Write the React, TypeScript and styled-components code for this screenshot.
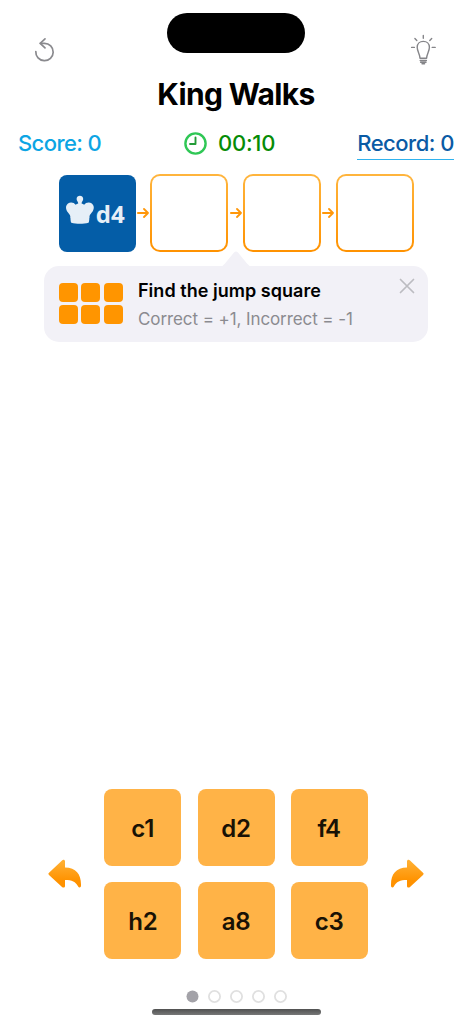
import React from "react";
import styled, { createGlobalStyle } from "styled-components";

const GlobalStyle = createGlobalStyle`
  * { box-sizing: border-box; }
  body { margin: 0; background: #fff; font-family: Inter, "Liberation Sans", sans-serif; }
  button { border: 0; padding: 0; background: none; font: inherit; color: inherit; }
  svg { display: block; flex: none; }
`;

const Screen = styled.main`
  width: 472px;
  height: 1024px;
  background: #fff;
  display: flex;
  flex-direction: column;
  overflow: hidden;
`;

const TopBar = styled.header`
  height: 74px;
  padding: 12.5px 36px 0 34px;
  display: flex;
  justify-content: space-between;
`;

const IconButton = styled.button<{ $top: number }>`
  height: 32px;
  width: 26px;
  margin-top: ${(p) => p.$top}px;
`;

const Island = styled.div`
  width: 138px;
  height: 40.5px;
  border-radius: 21px;
  background: #000;
  margin-left: 1px;
`;

const Title = styled.h1`
  margin: 0;
  height: 40px;
  line-height: 40px;
  text-align: center;
  font-size: 30px;
  font-weight: 700;
  letter-spacing: -0.65px;
  color: #000;
`;

const Stats = styled.section`
  height: 46px;
  margin-top: 14px;
  padding: 0 18px;
  display: grid;
  grid-template-columns: 166px 1fr auto;
  align-items: start;
  font-size: 22px;
  font-weight: 500;
  line-height: 31px;
`;

const Score = styled.span`
  color: #0ca5e4;
  letter-spacing: -0.6px;
`;

const Timer = styled.span`
  display: flex;
  align-items: center;
  gap: 11px;
  color: #068c06;
  letter-spacing: -0.25px;
`;

const RecordLink = styled.span`
  color: #0a5ba5;
  height: 31px;
  box-shadow: 0 1px 0 #2fb2ee;
  letter-spacing: -0.5px;
`;

const Path = styled.section`
  height: 79px;
  margin: -0.5px 58px 0 58.7px;
  display: flex;
  align-items: center;
  justify-content: space-between;
`;

const StartSquare = styled.div`
  width: 77px;
  height: 77px;
  border-radius: 8px;
  background: #045da7;
  color: #e6eff7;
  display: flex;
  align-items: center;
  padding-left: 7px;
  gap: 2px;
  font-family: "Open Sans", "Noto Sans", sans-serif;
  font-size: 24px;
  font-weight: 700;
  line-height: 30px;
`;

const StartLabel = styled.span`
  padding-top: 1px;
`;

const EmptySquare = styled.div`
  width: 78.2px;
  height: 78.5px;
  border: 2px solid transparent;
  border-radius: 10px;
  background: linear-gradient(#fff, #fff) padding-box,
    linear-gradient(#ffb53d, #ff9200) border-box;
`;

const Tip = styled.aside`
  position: relative;
  width: 384px;
  height: 76px;
  margin: 13.5px 0 0 44px;
  padding: 17px 13px 0 15px;
  display: flex;
  align-items: flex-start;
  border-radius: 15px;
  background: #f2f1f7;
`;

const TipPointer = styled.svg`
  position: absolute;
  left: 176px;
  top: -15px;
`;

const MiniGrid = styled.div`
  display: grid;
  grid-template-columns: repeat(3, 19px);
  grid-auto-rows: 19px;
  gap: 3.4px;
  width: 64px;
`;

const MiniKey = styled.span`
  border-radius: 4px;
  background: #ff9500;
`;

const TipText = styled.div`
  flex: 1;
  padding-left: 15px;
  white-space: nowrap;
`;

const TipTitle = styled.div`
  margin-top: -3px;
  height: 22px;
  line-height: 22px;
  font-size: 18px;
  font-weight: 600;
  letter-spacing: 0.03px;
  color: #000;
`;

const TipBody = styled.div`
  margin-top: 6px;
  height: 22px;
  line-height: 22px;
  font-size: 17px;
  letter-spacing: -0.09px;
  color: #8b8b90;
`;

const CloseButton = styled.button`
  margin-top: -5px;
`;

const Pad = styled.section`
  margin-top: auto;
  padding: 0 48px;
  display: flex;
  align-items: center;
  justify-content: space-between;
`;

const Keys = styled.div`
  display: grid;
  grid-template-columns: repeat(3, 77px);
  grid-auto-rows: 77px;
  gap: 16.2px;
`;

const Key = styled.button`
  border-radius: 8px;
  background: #ffb347;
  color: #191205;
  font-size: 24px;
  font-weight: 600;
  letter-spacing: -0.2px;
  padding-top: 2px;
`;

const Dots = styled.nav`
  margin-top: 30.5px;
  height: 13px;
  display: flex;
  justify-content: center;
  gap: 9px;
`;

const Dot = styled.svg`
  width: 13px;
  height: 13px;
`;

const HomeBar = styled.div`
  width: 169px;
  height: 6px;
  margin: 6.5px auto 9px;
  border-radius: 3px;
  background: linear-gradient(#505151, #777878);
`;

const RestartIcon = () => (
  <svg width="26" height="32" viewBox="34 34 26 32" fill="none" stroke="#8a8a8e" strokeWidth="1.7" strokeLinecap="round" strokeLinejoin="round">
    <path d="M35.8 51.5a8.7 8.7 0 1 0 8.7-8.2H40.3" />
    <path d="M45 38.9L40.2 43.3L45 47.9" />
  </svg>
);

const BulbIcon = () => (
  <svg width="26" height="32" viewBox="410 34 26 32" fill="none" stroke="#858589" strokeWidth="1.4" strokeLinecap="round" strokeLinejoin="round">
    <path d="M420 58.3C419.7 53.5 417.2 51.3 417.2 47.3C417.2 43.8 419.8 41.4 423.3 41.4S429.4 43.8 429.4 47.3C429.4 51.3 426.9 53.5 426.6 58.3Z" />
    <path d="M420.2 60.5H426.4M420.6 62.3H426M422 63.8H424.6M423.3 35.4V38.3M414.9 38.6L416.8 40.6M431.7 38.6L429.8 40.6M411.6 47.4H414.4M432.2 47.4H435.2" />
  </svg>
);

const ClockIcon = () => (
  <svg width="23" height="23" viewBox="0 0 23 23" fill="none">
    <circle cx="11.5" cy="11.5" r="10.1" stroke="#2fc755" strokeWidth="2.4" />
    <path d="M11.5 5.5V12H6" stroke="#239c37" strokeWidth="1.9" strokeLinecap="round" strokeLinejoin="round" />
  </svg>
);

const KingIcon = () => (
  <svg width="28" height="36" viewBox="66 195 28 36" fill="#e6eff7">
    <path d="M78.2 203.4C78.3 201.8 76.6 200.8 76.6 198.9C76.6 194.8 83.2 194.8 83.2 198.9C83.2 200.8 81.5 201.8 81.6 203.4C82.6 203.6 83.4 204 84.1 204.8C85.6 202.3 89.4 201.6 91.8 203.4C94.5 205.5 94.1 209.2 92.6 211.6C91.2 213.6 89.9 214.6 89.4 216.4C90 217.4 89.1 218 89.3 219.2C89.1 220.5 89.2 221.6 88.5 222.7C83.4 224.1 76.4 224.1 71.3 222.7C70.6 221.6 70.7 220.5 70.5 219.2C70.7 218 69.8 217.4 70.4 216.4C69.9 214.6 68.6 213.6 67.2 211.6C65.7 209.2 65.3 205.5 68 203.4C70.4 201.6 74.2 202.3 75.7 204.8C76.4 204 77.2 203.6 78.2 203.4Z" />
  </svg>
);

const StepArrow = () => (
  <svg width="12" height="10" viewBox="0 0 12 10" fill="none" stroke="#ff9709" strokeWidth="1.8" strokeLinecap="round" strokeLinejoin="round">
    <path d="M.9 5H11M7 1L11 5L7 9" />
  </svg>
);

const ReplyArrow = ({ flip, id }: { flip?: boolean; id: string }) => (
  <svg width="33" height="29" viewBox="0 0 33 29">
    <defs>
      <linearGradient id={id} x1="0" y1="0" x2="0" y2="1">
        <stop offset="0.1" stopColor="#ffae30" />
        <stop offset="0.75" stopColor="#ff9200" />
      </linearGradient>
    </defs>
    <path
      transform={flip ? "translate(33 0.3) scale(-1 1)" : "translate(0 0.3)"}
      fill={`url(#${id})`}
      d="M1 13.4L14 1.2C15.3 0 17 .6 17 2.2V8.2C28 8.2 33 15 33 25V26.5C33 28.5 31 28.8 30.1 27.2C27.6 22.6 24 20.8 17 20.8V26.6C17 28.2 15.3 28.8 14 27.6L1 15.6Q-.2 14.5 1 13.4Z"
    />
  </svg>
);

const squares = ["c1", "d2", "f4", "h2", "a8", "c3"];

const PageDot = ({ active }: { active?: boolean }) => (
  <Dot viewBox="0 0 13 13">
    {active ? (
      <circle cx="6.5" cy="6.5" r="6" fill="#a3a2a8" />
    ) : (
      <circle cx="6.5" cy="6.5" r="5.6" fill="#fff" stroke="#e0e0e0" strokeWidth="1.8" />
    )}
  </Dot>
);

export default function App() {
  return (
    <>
      <GlobalStyle />
      <Screen>
        <TopBar>
          <IconButton $top={21.5} aria-label="Restart"><RestartIcon /></IconButton>
          <Island />
          <IconButton $top={21.5} aria-label="Hint"><BulbIcon /></IconButton>
        </TopBar>
        <Title>King Walks</Title>
        <Stats>
          <Score>Score: 0</Score>
          <Timer><ClockIcon />00:10</Timer>
          <RecordLink>Record: 0</RecordLink>
        </Stats>
        <Path>
          <StartSquare><KingIcon /><StartLabel>d4</StartLabel></StartSquare>
          {[1, 2, 3].map((n) => (
            <React.Fragment key={n}>
              <StepArrow />
              <EmptySquare />
            </React.Fragment>
          ))}
        </Path>
        <Tip>
          <TipPointer width="32" height="16" viewBox="0 0 32 16" fill="#f2f1f7">
            <path d="M0 16Q3 15 5 12.5L14 1.5Q16-.5 18 1.5L27 12.5Q29 15 32 16Z" />
          </TipPointer>
          <MiniGrid>{squares.map((s) => <MiniKey key={s} />)}</MiniGrid>
          <TipText>
            <TipTitle>Find the jump square</TipTitle>
            <TipBody>Correct = +1, Incorrect = -1</TipBody>
          </TipText>
          <CloseButton aria-label="Close">
            <svg width="16" height="16" viewBox="0 0 16 16" stroke="#bcbcc1" strokeWidth="1.7" strokeLinecap="round">
              <path d="M1.5 1.5L14.5 14.5M14.5 1.5L1.5 14.5" />
            </svg>
          </CloseButton>
        </Tip>
        <Pad>
          <button aria-label="Previous"><ReplyArrow id="back" /></button>
          <Keys>{squares.map((s) => <Key key={s}>{s}</Key>)}</Keys>
          <button aria-label="Next"><ReplyArrow id="next" flip /></button>
        </Pad>
        <Dots>
          {[0, 1, 2, 3, 4].map((n) => <PageDot key={n} active={n === 0} />)}
        </Dots>
        <HomeBar />
      </Screen>
    </>
  );
}
